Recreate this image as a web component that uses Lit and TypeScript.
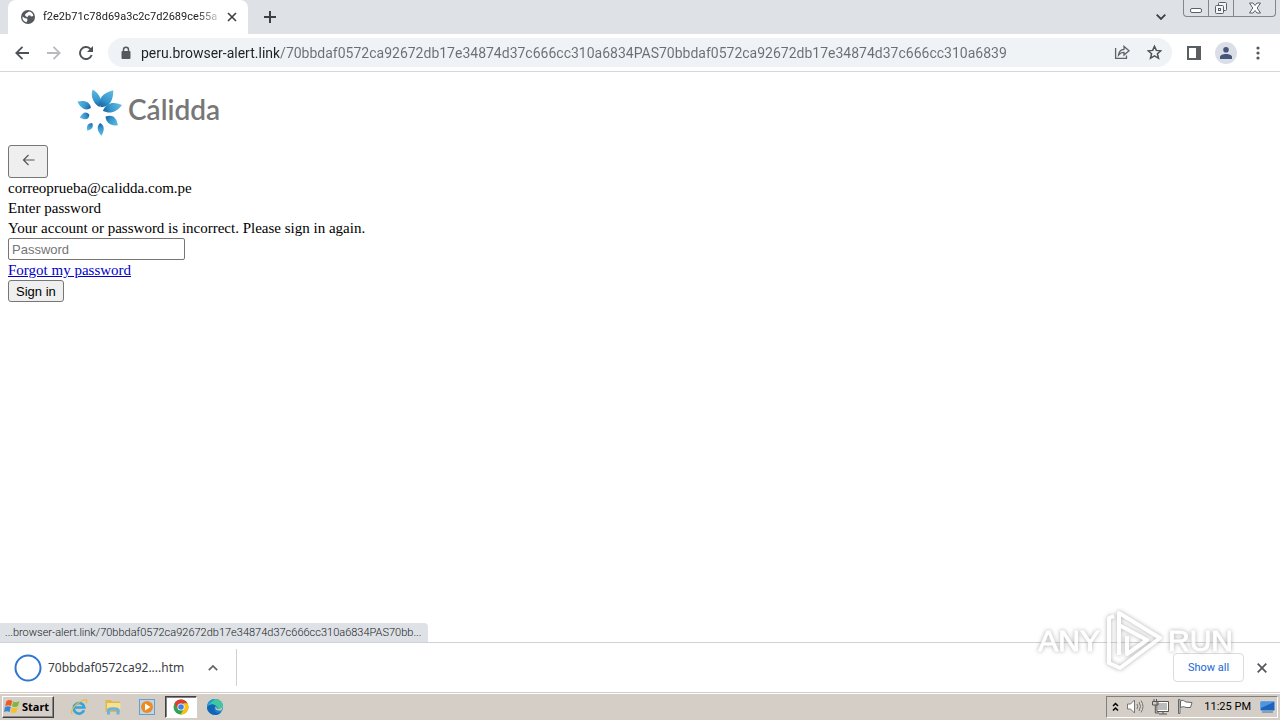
import { LitElement, html, svg, css } from "lit";
import { customElement } from "lit/decorators.js";

const HASH = "70bbdaf0572ca92672db17e34874d37c666cc310a683";
const URL_TEXT = `peru.browser-alert.link/${HASH}4PAS${HASH}9`;

@customElement("browser-chrome")
class BrowserChrome extends LitElement {
  static styles = css`
    :host { display: block; font-family: Roboto, "Noto Sans", sans-serif; color: #202124; }
    button { border: 0; padding: 0; margin: 0; background: none; font: inherit; color: #5f6368; display: grid; place-items: center; }
    svg { display: block; }
    .strip { display: flex; height: 34px; background: #dee1e6; padding-left: 8px; }
    .tab { display: flex; align-items: center; width: 240px; box-sizing: border-box; background: #fff; border-radius: 8px 8px 0 0; padding: 0 9px 0 13px; gap: 8px; }
    .title { flex: 1; min-width: 0; white-space: nowrap; font-size: 11px; line-height: 16px; mask-image: linear-gradient(90deg, #000 88%, transparent 104%); }
    .tabclose { width: 14px; height: 14px; }
    .new { width: 44px; }
    .spacer { flex: 1; }
    .search { width: 24px; margin-right: 10px; }
    .wins { display: flex; height: 17px; box-sizing: border-box; margin-right: 4px; border: 1px solid #83868c; border-top: 0; border-radius: 0 0 4px 4px; }
    .wins button { width: 25px; border-right: 1px solid #83868c; }
    .wins button:last-child { width: 41px; border: 0; }
    .bar { display: flex; align-items: center; height: 37px; background: #fff; border-bottom: 1px solid #d5d7da; padding: 0 6px; }
    .nav { width: 32px; height: 32px; }
    .field { flex: 1; display: flex; align-items: center; height: 29px; margin: 0 6px; border-radius: 15px; background: #f0f3f6; padding: 0 2px 0 12px; }
    .url { flex: 1; min-width: 0; border: 0; outline: 0; padding: 0; margin-left: 9px; font: 14px/20px Roboto, sans-serif; color: transparent; background: linear-gradient(90deg, #202124 138px, #6a6e73 138px); background-clip: text; -webkit-background-clip: text; }
  `;
  render() {
    return html`
      <div class="strip">
        <div class="tab">
          <svg width="14" height="14" viewBox="0 0 14 14"><circle cx="7" cy="7" r="7" fill="#55595d"/><path d="M1.500 6.500 4 8.300 6 8.600 6.500 10 5.500 12.300A5.600 5.600 0 0 1 1.500 6.500ZM5 3.500 8 1.600A5.500 5.500 0 0 1 12.400 6L10 6.400 9.200 5.200 7 5.800 6.600 7.300 5 6.500 3.800 5Z" fill="#fff"/></svg>
          <span class="title">f2e2b71c78d69a3c2c7d2689ce55a8</span>
          <button class="tabclose" aria-label="Close tab"><svg width="10" height="10" viewBox="0 0 10 10"><path d="M1 1 9 9M9 1 1 9" stroke="#3c4043" stroke-width="1.600"/></svg></button>
        </div>
        <button class="new" aria-label="New tab"><svg width="12" height="12" viewBox="0 0 12 12"><path d="M6 0V12M0 6H12" stroke="#3c4043" stroke-width="2"/></svg></button>
        <div class="spacer"></div>
        <button class="search" aria-label="Search tabs"><svg width="10" height="6" viewBox="0 0 10 6"><path d="M.7 .7 5 5 9.300 .7" fill="none" stroke="#3c4043" stroke-width="1.800"/></svg></button>
        <div class="wins">
          <button aria-label="Minimize"><svg width="12" height="14"><rect x=".5" y="7.500" width="11" height="4" rx="1.500" fill="#fff" stroke="#5c6066"/></svg></button>
          <button aria-label="Restore"><svg width="14" height="14" fill="#f4f5f7" stroke="#5c6066"><rect x="4.500" y="1.500" width="8" height="8" rx="1"/><rect x="1.500" y="4.500" width="8" height="8" rx="1"/><rect x="4.500" y="7.500" width="2" height="2"/></svg></button>
          <button aria-label="Close"><svg width="12" height="12" viewBox="0 0 12 12"><path d="M.5 1H4L6 3.500 8 1H11.500L8.200 6 11.500 11H8L6 8.500 4 11H.5L3.800 6Z" fill="#fff" stroke="#5c6066"/></svg></button>
        </div>
      </div>
      <div class="bar">
        <button class="nav" aria-label="Back"><svg width="14" height="14" viewBox="0 0 14 14" fill="none" stroke="#4e5256" stroke-width="1.800"><path d="M14 7H1.500M7.500 .8 1.300 7 7.500 13.200"/></svg></button>
        <button class="nav" aria-label="Forward"><svg width="14" height="14" viewBox="0 0 14 14" fill="none" stroke="#b8babd" stroke-width="1.800"><path d="M0 7H12.500M6.500 .8 12.700 7 6.500 13.200"/></svg></button>
        <button class="nav" aria-label="Reload"><svg width="14" height="14" viewBox="0 0 14 14"><path d="M12.700 9A6 6 0 1 1 11.200 2.700L12.500 4" fill="none" stroke="#4e5256" stroke-width="1.900"/><path d="M14 0V6H8Z" fill="#4e5256"/></svg></button>
        <div class="field">
          <svg width="12" height="14" viewBox="0 0 12 14"><rect x="1.500" y="5" width="9" height="8" rx="1" fill="#55595d"/><path d="M3.500 6V3.800a2.500 2.500 0 0 1 5 0V6" fill="none" stroke="#55595d" stroke-width="1.500"/></svg>
          <input class="url" type="text" aria-label="Address" .value=${URL_TEXT}>
          <button class="nav" aria-label="Share"><svg width="16" height="15" viewBox="0 0 16 15" fill="none" stroke="#5f6368" stroke-width="1.300"><path d="M1.600 3V13.300H12.500V10.500M4.500 10C5 6 7 4.500 10 4.300V1.500L15 5.800 10 10V7.300C7.500 7.300 6 8 4.500 10Z"/></svg></button>
          <button class="nav" aria-label="Bookmark"><svg width="15" height="15" viewBox="0 0 15 15"><path d="M7.500 1.200 9.300 5.400 13.900 5.800 10.400 8.800 11.500 13.300 7.500 10.900 3.500 13.300 4.600 8.800 1.100 5.800 5.700 5.400Z" fill="none" stroke="#4e5256" stroke-width="1.500"/></svg></button>
        </div>
        <button class="nav" aria-label="Side panel"><svg width="14" height="14"><rect x="1" y="1" width="12" height="12" fill="none" stroke="#5b5d61" stroke-width="2"/><path d="M9 1h4v12H9z" fill="#5b5d61"/></svg></button>
        <button class="nav" aria-label="Profile"><svg width="22" height="22"><circle cx="11" cy="11" r="11" fill="#dadfe7"/><circle cx="11" cy="7.700" r="2.800" fill="#46567a"/><path d="M5 17V15c0-2 3-3 6-3s6 1 6 3v2z" fill="#46567a"/></svg></button>
        <button class="nav" aria-label="Menu"><svg width="4" height="14" fill="#55595d"><circle cx="2" cy="2" r="1.600"/><circle cx="2" cy="7" r="1.600"/><circle cx="2" cy="12" r="1.600"/></svg></button>
      </div>`;
  }
}

@customElement("login-page")
class LoginPage extends LitElement {
  static styles = css`
    :host { display: block; background: #fff; color: #000; font: 15px/20px "Liberation Serif", serif; padding: 8px; }
    .logo { display: flex; align-items: center; gap: 5px; height: 65px; padding: 0 0 0 68px; box-sizing: border-box; }
    .name { font: 600 28px/36px Lato, "Noto Sans", sans-serif; color: #777; margin-bottom: 8px; }
    button { display: block; box-sizing: border-box; border: 1px solid #767676; border-radius: 3px; background: #efefef; color: #000; font: 13px/16px "Liberation Sans", sans-serif; padding: 3px 7px 1px; }
    .back { width: 40px; height: 33px; display: grid; place-items: center; padding: 0 0 3px; }
    input { display: block; box-sizing: border-box; width: 177px; height: 22px; border: 1px solid #767676; border-radius: 2px; padding: 1px 3px; font: 13px/16px "Liberation Sans", sans-serif; }
    input::placeholder { color: #757575; }
    a { color: #0000c8; }
  `;
  render() {
    const petals: [number, string][] = [
      [-6, "M1-5C-5-9-7-17-4-23 3-18 5-10 1-5Z"],
      [31, "M-1-5C-8-10-7-18 1-26 6-18 7-10-1-5Z"],
      [73, "M0-4C-7-10-6-17 0-24 5-17 6-10 0-4Z"],
      [125, "M0-8C-6-12-6-17 0-23 5-18 5-12 0-8Z"],
      [174, "M0-11C-4-14-4-18 0-24 4-18 4-14 0-11Z"],
      [212, "M0-13C-3-15-4-18 0-22 4-18 3-15 0-13Z"],
      [254, "M0-10C-5-12-4-16 0-20 4-16 5-12 0-10Z"],
      [296, "M0-9C-5-12-5-18 0-24 5-18 5-12 0-9Z"],
    ];
    return html`
      <div class="logo">
        <svg width="47" height="50" viewBox="-23 -24 47 50">
          <defs><linearGradient id="g" x1="0" y1="0" x2="0" y2="1"><stop offset="0" stop-color="#62bde4"/><stop offset=".6" stop-color="#3697cd"/><stop offset="1" stop-color="#17609f"/></linearGradient></defs>
          ${petals.map(([a, d]) => svg`<path d=${d} transform=${`rotate(${a})`} fill="url(#g)"/>`)}
        </svg>
        <span class="name">Cálidda</span>
      </div>
      <form @submit=${(e: Event) => e.preventDefault()}>
        <button type="button" class="back" aria-label="Back"><svg width="13" height="12" viewBox="0 0 13 12" fill="none" stroke="#555" stroke-width="1.200"><path d="M12.500 6H1.500M6.500 1 1.500 6 6.500 11"/></svg></button>
        <div>correoprueba@calidda.com.pe</div>
        <label for="pw">Enter password</label>
        <div>Your account or password is incorrect. Please sign in again.</div>
        <input id="pw" type="password" placeholder="Password">
        <div><a href="#">Forgot my password</a></div>
        <button>Sign in</button>
      </form>`;
  }
}

@customElement("download-shelf")
class DownloadShelf extends LitElement {
  static styles = css`
    :host { display: flex; align-items: center; height: 49px; background: #fff; border-top: 1px solid #cfd1d4; font: 12px/16px "Noto Sans", sans-serif; color: #3c4043; }
    button { border: 0; padding: 0; background: none; font: inherit; color: inherit; display: grid; place-items: center; }
    svg { display: block; }
    .item { display: flex; align-items: center; gap: 6px; height: 37px; width: 222px; padding-left: 14px; border-right: 1px solid #cfd1d4; }
    .caret { width: 22px; height: 22px; margin-left: 12px; }
    .spacer { flex: 1; }
    .all { width: 71px; height: 29px; border: 1px solid #dadce0; border-radius: 4px; color: #1967d2; font: 11px/16px Roboto, sans-serif; }
    .x { width: 36px; height: 30px; }
  `;
  render() {
    return html`
      <div class="item">
        <svg width="28" height="28"><circle cx="14" cy="14" r="12.500" fill="none" stroke="#2f76d2" stroke-width="2"/></svg>
        <span>70bbdaf0572ca92....htm</span>
        <button class="caret" aria-label="Download options"><svg width="10" height="6"><path d="M.8 5.200 5 1 9.200 5.200" fill="none" stroke="#5f6368" stroke-width="1.700"/></svg></button>
      </div>
      <div class="spacer"></div>
      <button class="all">Show all</button>
      <button class="x" aria-label="Close downloads"><svg width="10" height="10"><path d="M.7 .7 9.300 9.300M9.300 .7 .7 9.300" stroke="#55595d" stroke-width="1.800"/></svg></button>`;
  }
}

@customElement("task-bar")
class TaskBar extends LitElement {
  static styles = css`
    :host { display: flex; align-items: center; height: 28px; box-sizing: border-box; background: #d5cec6; border-top: 1px solid #d0cdc8; box-shadow: inset 0 1px #fff; padding: 0 2px; font: 11px/16px Roboto, "Noto Sans", sans-serif; color: #000; }
    button { display: grid; place-items: center; border: 0; padding: 0; background: none; font: inherit; color: #000; width: 32px; height: 22px; box-sizing: border-box; }
    svg { display: block; }
    .start { display: flex; align-items: center; gap: 1px; width: 52px; padding: 0 1px; font: 700 11px/16px "Noto Sans", sans-serif; border: 1px solid; border-color: #fff #404040 #404040 #fff; box-shadow: inset -1px -1px #888; }
    .apps { display: flex; flex: 1; padding-left: 9px; gap: 2px; }
    .on { background: #fff; border: 1px solid; border-color: #404040 #fff #fff #404040; box-shadow: inset 1px 1px #808080; }
    .tray { display: flex; align-items: center; height: 22px; box-sizing: border-box; border: 1px solid; border-color: #808080 #fff #fff #808080; padding: 0 1px 0 5px; gap: 8px; }
    .clock { margin-left: 3px; }
  `;
  render() {
    return html`
      <button class="start"><svg width="17" height="17" viewBox="0 0 17 17"><path d="M2.500 3C5 1.500 6.500 2 8.300 3L7 8C5 7 3.500 7 1.200 8Z" fill="#ed5a24"/><path d="M9.300 3.400C11 4.500 13 4.500 15.500 3L14 8C12 9.300 10 9.300 8 8.300Z" fill="#7db83a"/><path d="M1 9C3.500 7.800 5 8 6.800 9L5.500 14C3.500 12.800 2 13 0 14Z" fill="#3788d0"/><path d="M7.800 9.400C10 10.400 11.500 10.300 13.800 9L12.500 14C10.500 15.300 8.500 15.200 6.500 14.200Z" fill="#f5c22d"/></svg>Start</button>
      <div class="apps">
        <button aria-label="Internet Explorer"><svg width="18" height="18" viewBox="0 0 18 18" fill="none"><path d="M14 12.200A5.300 5.300 0 1 1 14.300 9.500H5" stroke="#36a4dc" stroke-width="2.600"/><path d="M2.500 16C-1 15 4.500 6.500 10.500 3.500S18 1 16 5.500" stroke="#e5bd45" stroke-width="1.300"/></svg></button>
        <button aria-label="File Explorer"><svg width="18" height="18" viewBox="0 0 18 18"><path d="M1.500 2H7L8 3.500H16V14H1.500Z" fill="#dfb84e"/><path d="M3 5H16.500V12H3Z" fill="#f6e190"/><path d="M3 16.500V11.500C3 8.500 15.500 8.500 15.500 11.500V16.500H12.500V12.500H6V16.500Z" fill="#6bb2dc"/></svg></button>
        <button aria-label="Media Player"><svg width="18" height="18" viewBox="0 0 18 18"><rect x="1.500" y="1.500" width="15" height="15" fill="#b8d8ee" stroke="#6a9dcc"/><circle cx="9" cy="9" r="6" fill="#f18a1d"/><path d="M7 5.500 12.500 9 7 12.500Z" fill="#fff"/></svg></button>
        <button class="on" aria-label="Chrome"><svg width="16" height="16" viewBox="0 0 16 16"><circle cx="8" cy="8" r="7.500" fill="#34a151"/><path d="M1.500 4.300A7.500 7.500 0 0 1 14.500 4.300H8L4.800 9.800Z" fill="#e33b2e"/><path d="M14.500 4.300A7.500 7.500 0 0 1 7.500 15.500L11.200 9.800 10.500 4.300Z" fill="#fbc116"/><circle cx="8" cy="8" r="3.600" fill="#fff"/><circle cx="8" cy="8" r="2.800" fill="#3f7fea"/></svg></button>
        <button aria-label="Edge"><svg width="18" height="18" viewBox="0 0 18 18"><circle cx="9" cy="9" r="8" fill="#1681cc"/><path d="M1 9C1.500 3.500 5.500 1 9.500 1 14 1 17 4.500 17 8 17 11 14 12 11.500 11 12 7 5 5 1 9Z" fill="#42c6a0"/><path d="M1 9C1.500 3.500 5 1 9 1 7 3 5 4 1 9Z" fill="#2397dc"/><path d="M1 9C4 5 9 5.500 10 8.500 8 9 7.500 12 9.500 14 11 15.500 13.500 15.300 15 14.300 12 18 7 17.500 4 15 2 13.500 1 11.500 1 9Z" fill="#1264b5"/><path d="M9.800 8.300C8.500 10.500 10 13.500 15.500 12.300L17 8Q15 12 11 11Z" fill="#d5cec6"/></svg></button>
      </div>
      <div class="tray">
        <svg width="7" height="10" fill="none" stroke="#000" stroke-width="1.500"><path d="M1 4 3.500 1.500 6 4M1 8.500 3.500 6 6 8.500"/></svg>
        <svg width="17" height="15" viewBox="0 0 17 15" fill="none" stroke="#777"><path d="M.5 5H3.500L7.500 1V14L3.500 10H.5Z" fill="#fff"/><path d="M10 5Q11.500 7.500 10 10M12 3Q15 7.500 12 12M14 1.500Q18 7.500 14 13.500"/></svg>
        <svg width="17" height="16" viewBox="0 0 17 16" stroke="#555"><rect x="5.500" y="3.500" width="10" height="8" fill="#bbb" stroke="#fff"/><path d="M5 2.500H16.500V12.500H5ZM7 15H15M11 12.500V15M.5 2.500H6V6H.5ZM2 0V2.500M4.500 0V2.500M3.300 6V14H7" fill="none"/></svg>
        <svg width="16" height="15" viewBox="0 0 16 15" stroke="#666"><path d="M3.500 2C6 .5 7 2 9 3L15 3.500 13.500 8.500H9C7 7.500 5.500 7.500 3.500 8.500Z" fill="#fff"/><path d="M1.500 .5H3V14.500H1.500Z" fill="#eee"/></svg>
        <span class="clock">11:25 PM</span>
        <svg width="17" height="14" viewBox="0 0 17 14"><path d="M1 1H16V11H1Z" fill="#1d64bd" stroke="#cdd9e8"/><path d="M2 2H15L2 8Z" fill="#4d98dc"/><path d="M3 12H14" stroke="#426a9c"/></svg>
      </div>`;
  }
}

@customElement("app-root")
class AppRoot extends LitElement {
  static styles = css`
    :host { display: flex; flex-direction: column; min-height: 100vh; position: relative; background: #fff; overflow: hidden; }
    .view { flex: 1; display: flex; flex-direction: column; position: relative; }
    .status { position: absolute; left: 0; bottom: 0; box-sizing: border-box; height: 19px; padding: 0 7px 0 5px; background: #dee1e6; color: #202124; border-radius: 0 4px 0 0; font: 300 11px/19px Roboto, sans-serif; white-space: nowrap; }
    .mark { position: absolute; right: 47px; bottom: 46px; display: flex; align-items: center; gap: 5px; pointer-events: none; font: 30px/66px "Liberation Sans", sans-serif; color: #fff; -webkit-text-stroke: 1px #fff; opacity: .8; filter: drop-shadow(0 0 2px #999); }
  `;
  render() {
    return html`
      <browser-chrome></browser-chrome>
      <div class="view">
        <login-page></login-page>
        <div class="status">...browser-alert.link/${HASH}4PAS70bb...</div>
      </div>
      <download-shelf></download-shelf>
      <task-bar></task-bar>
      <div class="mark">
        <span>ANY</span>
        <svg width="58" height="64" viewBox="0 0 58 64" fill="none" stroke="#fff" stroke-width="4" stroke-linejoin="round"><path d="M14 46V4L55 29 15 59 4 54V9L9 7M14 16 42 31 22 45V27"/></svg>
        <span>RUN</span>
      </div>`;
  }
}
